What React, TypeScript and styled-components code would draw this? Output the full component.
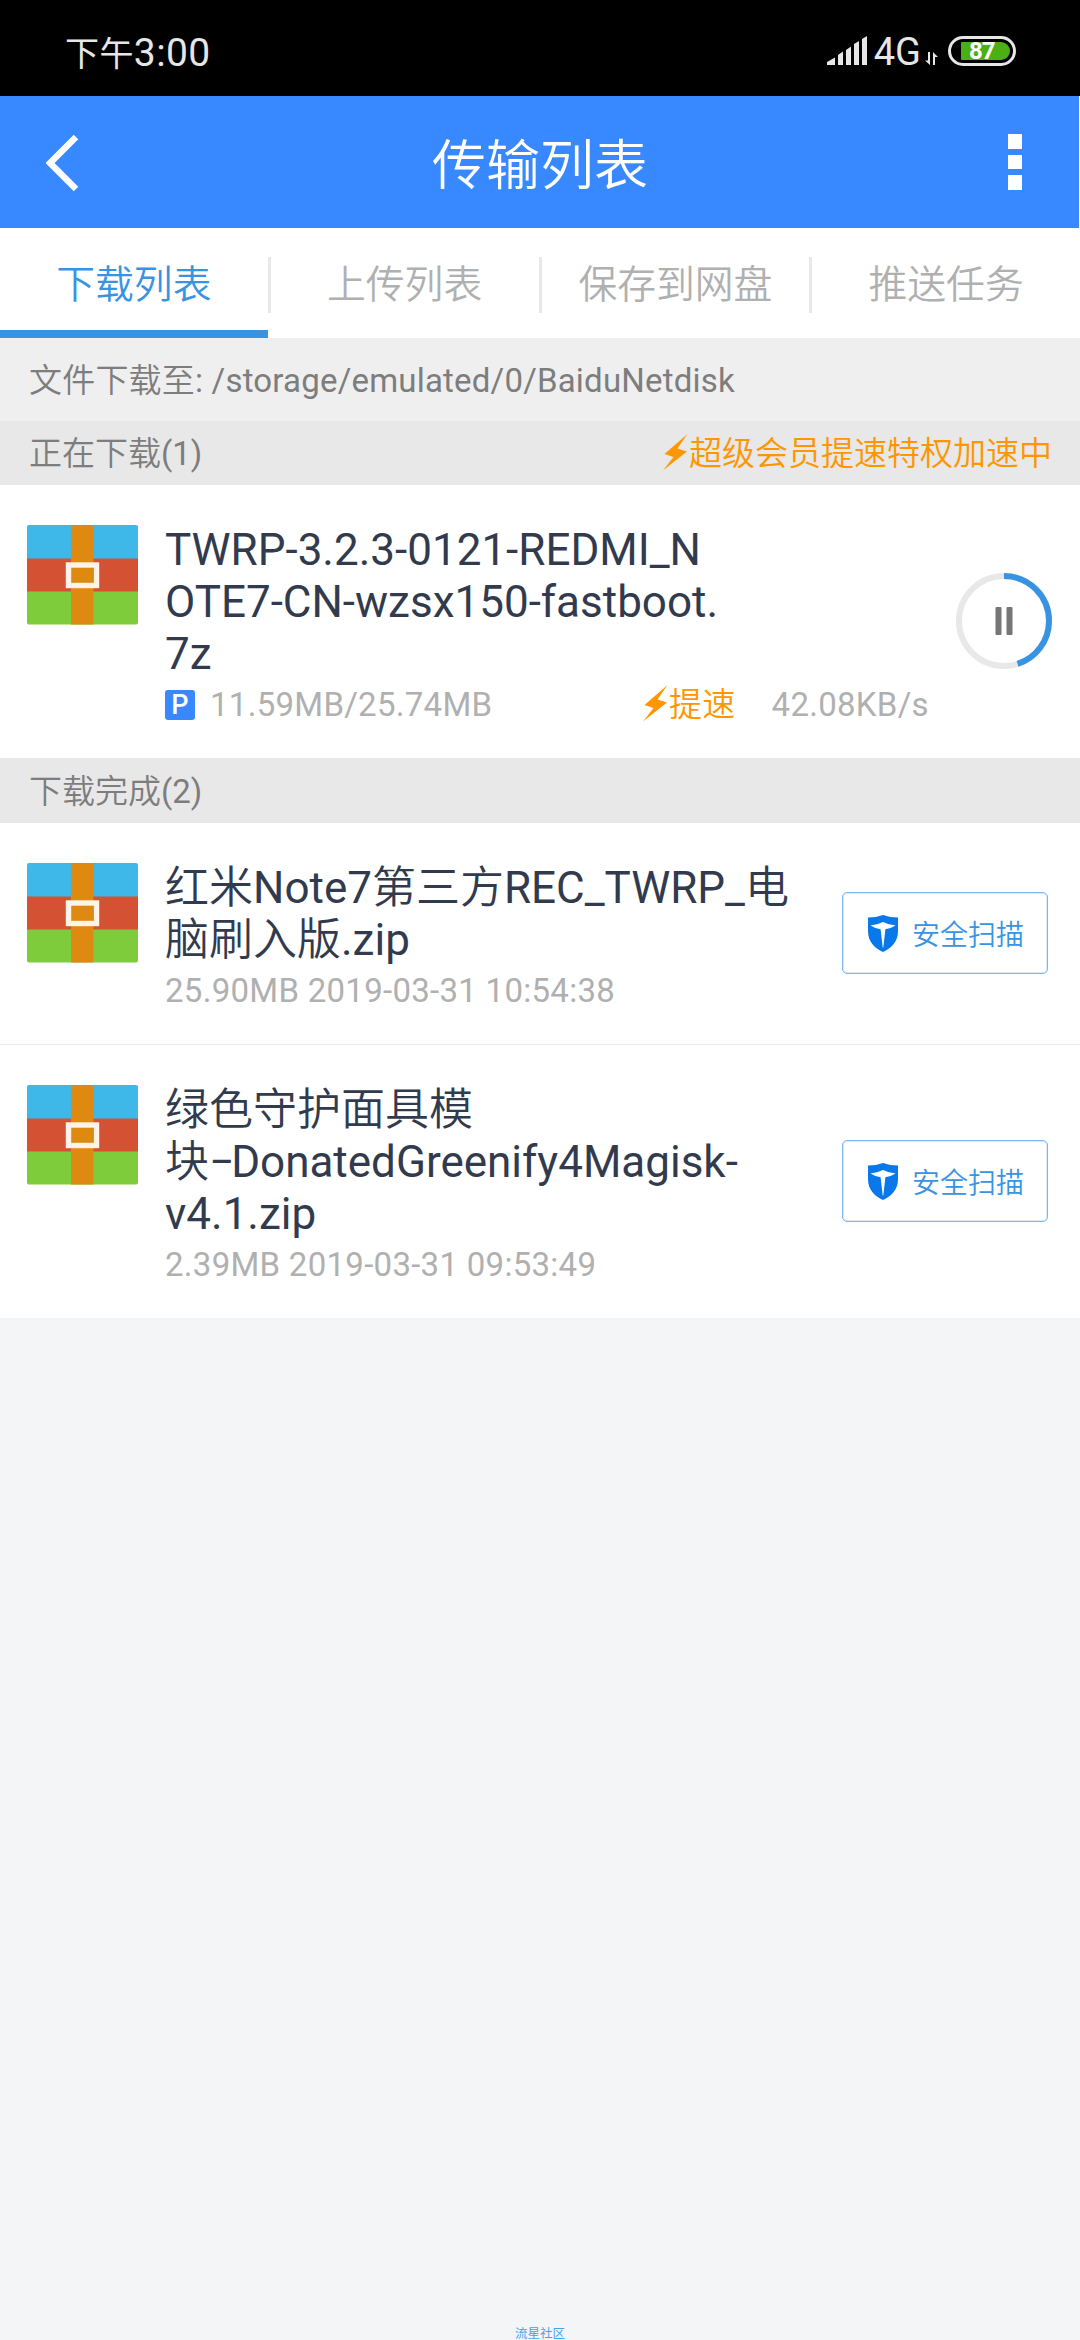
import React from 'react';
import styled, { createGlobalStyle } from 'styled-components';

const Global = createGlobalStyle`
  html, body { margin: 0; padding: 0; }
  body { background: #f4f5f7; }
  * { box-sizing: border-box; }
`;

const Screen = styled.div`
  width: 1080px;
  height: 2340px;
  display: flex;
  flex-direction: column;
  background: #f4f5f7;
  font-family: Roboto, 'Noto Sans CJK SC', sans-serif;
  overflow: hidden;
`;

const StatusBar = styled.div`
  height: 96px;
  flex: none;
  background: #000;
  color: #e6e6e6;
  display: flex;
  align-items: flex-start;
  justify-content: space-between;
  padding: 0 64px 0 65px;
`;

const Clock = styled.div`
  display: flex;
  align-items: baseline;
  font-size: 39px;
  line-height: 46px;
  padding-top: 30px;
  font-weight: 380;
  letter-spacing: 0.4px;
`;

const Period = styled.span`
  font-size: 34px;
  font-weight: 400;
`;

const StatusIcons = styled.div`
  display: flex;
  align-items: flex-start;
  padding-top: 36px;
`;

const Network = styled.span`
  font-size: 38px;
  line-height: 32px;
  font-weight: 380;
  margin: 0 4px 0 7px;
`;

const DataArrows = styled.svg`
  margin: 16px 10px 0 0;
`;

const Battery = styled.div`
  width: 68px;
  height: 30px;
  border: 3px solid #e6e6e6;
  border-radius: 15px;
  padding: 3px 3px 3px 10px;
`;

const Charge = styled.div`
  width: 49px;
  height: 18px;
  border-radius: 1px 9px 9px 1px;
  background: #4caf13;
  color: #fff;
  font-size: 24px;
  line-height: 19px;
  font-weight: 700;
  padding-left: 8px;
  letter-spacing: -1px;
`;

const TitleBar = styled.header`
  width: 1079px;
  height: 132px;
  flex: none;
  background: #3888ff;
  display: flex;
  align-items: center;
  justify-content: space-between;
  padding: 0 57px 0 46px;
`;

const Title = styled.h1`
  margin: 0;
  color: #fff;
  font-size: 54px;
  line-height: 64px;
  font-weight: 350;
  padding-top: 10px;
  width: 216px;
  white-space: nowrap;
`;

const BackIcon = styled.svg`
  margin-top: 2px;
`;

const Menu = styled.div`
  display: flex;
  flex-direction: column;
  gap: 6px;
  margin-left: 7px;
`;

const MenuDot = styled.span`
  width: 14px;
  height: 14.5px;
  background: #fff;
`;

const Tabs = styled.nav`
  height: 110px;
  flex: none;
  background: #fff;
  display: flex;
  align-items: flex-start;
`;

const Tab = styled.div<{ $active?: boolean }>`
  flex: 1;
  height: 110px;
  text-align: center;
  font-size: 38.8px;
  line-height: 114px;
  font-weight: 350;
  color: ${(p) => (p.$active ? '#3993e3' : '#b0b0b0')};
  border-bottom: ${(p) => (p.$active ? '8px solid #3993e3' : '0')};
`;

const Divider = styled.div`
  width: 3px;
  height: 56px;
  margin-top: 29px;
  background: #e8e8e8;
`;

const PathBar = styled.div`
  height: 83px;
  flex: none;
  background: #efefef;
  padding-left: 29px;
  font-size: 33px;
  line-height: 86px;
  color: #7d7d7d;
  letter-spacing: 0.2px;
`;

const Light = styled.span`
  font-weight: 350;
`;

const Dash = styled.span`
  letter-spacing: -3px;
`;

const SectionHeader = styled.div<{ $height: number }>`
  height: ${(p) => p.$height}px;
  flex: none;
  background: #e8e8e8;
  display: flex;
  align-items: center;
  justify-content: space-between;
  padding: 2px 28px 0 29px;
  font-size: 33px;
  line-height: 60px;
  color: #7d7d7d;
`;

const Boost = styled.span`
  display: flex;
  align-items: center;
  gap: 1px;
  color: #ff9600;
  font-weight: 350;
`;

const BoltIcon = styled.svg`
  margin-top: -3px;
`;

const Row = styled.section<{ $height: number; $line?: boolean }>`
  height: ${(p) => p.$height}px;
  flex: none;
  background: #fff;
  border-bottom: ${(p) => (p.$line ? '1px solid #ebebeb' : '0')};
  display: flex;
  align-items: flex-start;
  padding: 39px 32px 0 27px;
`;

const ArchiveIcon = styled.svg`
  flex: none;
  margin-top: 1px;
`;

const Info = styled.div`
  flex: 1;
  min-width: 0;
  margin-left: 27px;
`;

const FileName = styled.div`
  color: #323b4d;
  font-size: 44px;
  line-height: 52px;
  white-space: nowrap;
`;

const Meta = styled.div`
  display: flex;
  align-items: center;
  font-size: 33px;
  line-height: 44px;
  height: 46px;
  color: #b0b0b0;
  padding-top: 4px;
  letter-spacing: 0.28px;
  white-space: nowrap;
`;

const PBadge = styled.span`
  width: 30px;
  height: 30px;
  border-radius: 3px;
  background: #3888ff;
  color: #fff;
  font-size: 27px;
  line-height: 31px;
  text-align: center;
  font-weight: 500;
  margin: -1px 15px 0 0;
`;

const Progress = styled.span`
  width: 433px;
`;

const Speed = styled.span`
  margin-left: 36px;
`;

const Action = styled.div`
  flex: none;
  align-self: center;
  margin-top: -40px;
`;

const ProgressSlot = styled.div`
  flex: none;
  margin: 49px -4px 0 0;
  height: 96px;
`;

const ScanButton = styled.div`
  width: 206px;
  height: 82px;
  border: 1px solid #7db7f2;
  box-shadow: inset 0 0 0 1px #d9eafb;
  border-radius: 5px;
  display: flex;
  align-items: center;
  padding-left: 25px;
  gap: 14px;
  color: #3993e3;
  font-size: 28px;
  font-weight: 350;
  white-space: nowrap;
`;

const Watermark = styled.footer`
  margin-top: auto;
  text-align: center;
  font-size: 12.5px;
  line-height: 13px;
  height: 13px;
  color: #3fa4f0;
`;

const Bolt = () => (
  <BoltIcon width="25" height="37" viewBox="0 0 25 37">
    <path d="M24.5 0 L1.5 20 L10.5 23 L0 36.5 L24 17.5 L14.5 14.5 Z" fill="#ff9600" />
  </BoltIcon>
);

const Archive = () => (
  <ArchiveIcon width="111" height="100" viewBox="0 0 111 100">
    <rect width="111" height="40" rx="2" fill="#3db8e8" />
    <rect y="60" width="111" height="39.5" rx="2" fill="#7ecc3b" />
    <rect y="33.5" width="111" height="33" fill="#d45233" />
    <rect x="44" width="22.5" height="99.5" fill="#de890f" />
    <rect x="41.5" y="40" width="28" height="20.5" fill="none" stroke="#fdf3e8" strokeWidth="5.4" />
  </ArchiveIcon>
);

const Shield = () => (
  <svg width="30" height="37" viewBox="0 0 30 37">
    <path d="M15 0 Q8 2.6 0 2.6 V16 C0 27 7 33.5 15 37 C23 33.5 30 27 30 16 V2.6 Q22 2.6 15 0 Z" fill="#0878ea" />
    <path d="M2.5 10.5 Q9 10 15 7 Q21 10 27.5 10.5 Q22 14 17.4 14.3 L15.3 32.5 H14.7 L12.6 14.3 Q8 14 2.5 10.5 Z" fill="#fff" />
  </svg>
);

const ratio = 11.59 / 25.74;
const ring = 2 * Math.PI * 45;

const ProgressRing = () => (
  <svg width="96" height="96" viewBox="0 0 96 96">
    <circle cx="48" cy="48" r="45" fill="none" stroke="#e8e8e8" strokeWidth="6" />
    <circle
      cx="48" cy="48" r="45" fill="none" stroke="#3993e3" strokeWidth="6"
      strokeDasharray={`${ring * ratio} ${ring}`} transform="rotate(-90 48 48)"
    />
    <rect x="39.5" y="34" width="6" height="28" rx="1" fill="#767676" />
    <rect x="50.5" y="34" width="6" height="28" rx="1" fill="#767676" />
  </svg>
);

const finished = [
  {
    height: 222,
    line: true,
    name: ['红米Note7第三方REC_TWRP_电', '脑刷入版.zip'],
    meta: '25.90MB 2019-03-31 10:54:38',
  },
  {
    height: 273,
    line: false,
    name: ['绿色守护面具模', '块−DonatedGreenify4Magisk-', 'v4.1.zip'],
    meta: '2.39MB 2019-03-31 09:53:49',
  },
];

const MixedText = ({ text }: { text: string }) => (
  <>
    {text.split(/([\u4e00-\u9fff]+|−)/).map((part, i) => {
      if (part === '−') return <Dash key={i}>{part}</Dash>;
      return i % 2 ? <Light key={i}>{part}</Light> : part;
    })}
  </>
);

export default function App() {
  return (
    <Screen>
      <Global />
      <StatusBar>
        <Clock><Period>下午</Period>3:00</Clock>
        <StatusIcons>
          <svg width="40" height="30" viewBox="0 0 40 30">
            <path d="M0 29 V26 L8 21.5 V29Z M11 29 V19 L16 15.5 V29Z M19 29 V14 L24 10.5 V29Z M27 29 V8 L32 5 V29Z M35 29 V3 L40 0 V29Z" fill="#e6e6e6" />
          </svg>
          <Network>4G</Network>
          <DataArrows width="13" height="14" viewBox="0 0 13 14">
            <path d="M3 0 H5 V13 L0 8.5 H3Z M8 13 H10 V5 H13 L8 0Z" fill="#e6e6e6" />
          </DataArrows>
          <Battery><Charge>87</Charge></Battery>
        </StatusIcons>
      </StatusBar>
      <TitleBar>
        <BackIcon width="33" height="58" viewBox="0 0 33 58">
          <path d="M30 3 L4 29 L30 55" fill="none" stroke="#fff" strokeWidth="6.5" />
        </BackIcon>
        <Title>传输列表</Title>
        <Menu><MenuDot /><MenuDot /><MenuDot /></Menu>
      </TitleBar>
      <Tabs>
        <Tab $active>下载列表</Tab>
        <Divider />
        <Tab>上传列表</Tab>
        <Divider />
        <Tab>保存到网盘</Tab>
        <Divider />
        <Tab>推送任务</Tab>
      </Tabs>
      <PathBar><MixedText text="文件下载至: /storage/emulated/0/BaiduNetdisk" /></PathBar>
      <SectionHeader $height={64}>
        <span><MixedText text="正在下载(1)" /></span>
        <Boost><Bolt />超级会员提速特权加速中</Boost>
      </SectionHeader>
      <Row $height={273}>
        <Archive />
        <Info>
          <FileName>TWRP-3.2.3-0121-REDMI_N</FileName>
          <FileName>OTE7-CN-wzsx150-fastboot.</FileName>
          <FileName>7z</FileName>
          <Meta>
            <PBadge>P</PBadge>
            <Progress>11.59MB/25.74MB</Progress>
            <Boost><Bolt />提速</Boost>
            <Speed>42.08KB/s</Speed>
          </Meta>
        </Info>
        <ProgressSlot><ProgressRing /></ProgressSlot>
      </Row>
      <SectionHeader $height={65}>
        <span><MixedText text="下载完成(2)" /></span>
      </SectionHeader>
      {finished.map((file) => (
        <Row key={file.meta} $height={file.height} $line={file.line}>
          <Archive />
          <Info>
            {file.name.map((line) => (
              <FileName key={line}><MixedText text={line} /></FileName>
            ))}
            <Meta>{file.meta}</Meta>
          </Info>
          <Action>
            <ScanButton><Shield />安全扫描</ScanButton>
          </Action>
        </Row>
      ))}
      <Watermark>流星社区</Watermark>
    </Screen>
  );
}
